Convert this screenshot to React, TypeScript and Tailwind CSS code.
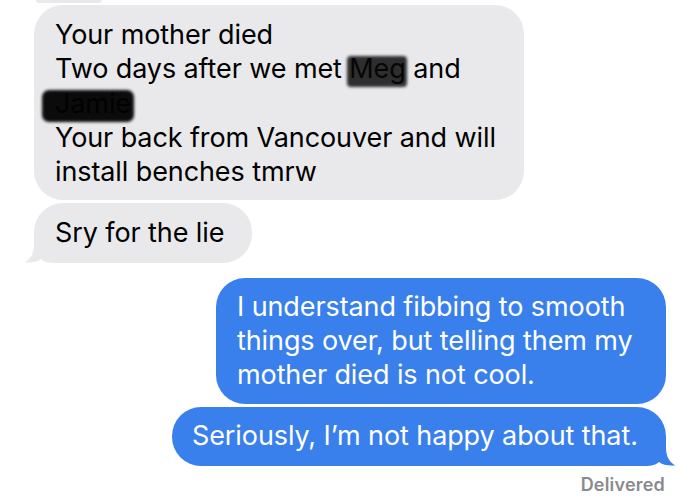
import React from "react";

const GRAY = "#e9e9eb";
const BLUE = "#3a80ec";

function Tail({ color, side }: { color: string; side: "left" | "right" }) {
  return (
    <svg
      width="40"
      height="30"
      viewBox="0 0 40 30"
      className={
        side === "left"
          ? "absolute -left-[10px] bottom-0"
          : "absolute -right-[10px] bottom-0 -scale-x-100"
      }
    >
      <path
        d="M10 0 L10 12 C10 21 6 26.5 0.5 29.6 C7 30.4 13 29 17 26 C20 28.6 24 30 31 30 L40 30 L40 0 Z"
        fill={color}
      />
      <path
        d="M0 30 L0.5 29.6 C7 30.4 13 29 17 26 C20 28.6 24 30 31 30 Z"
        fill="#ffffff"
      />
    </svg>
  );
}

function Redact({
  children,
  className,
}: {
  children: React.ReactNode;
  className: string;
}) {
  return (
    <span className="relative inline-block">
      <span className="text-[#222]">{children}</span>
      <span className={"absolute bg-black blur-[1.5px] " + className} />
    </span>
  );
}

export default function App() {
  return (
    <div className="w-[700px] h-[502px] bg-white overflow-hidden font-['Inter',sans-serif] text-[27px] leading-[34.25px] tracking-[-0.1px]">
      <div className="ml-[36px] w-[66px] h-[3px] rounded-b-[10px] bg-[#e9e9eb]" />
      <div className="flex flex-col">
        <div className="ml-[34px] mt-[2px] w-[490px] rounded-[29px] bg-[#e9e9eb] pl-[21px] pt-[13px] pb-[11px] text-black">
          <div>Your mother died</div>
          <div>
            Two days after we met{" "}
            <Redact className="-left-[2px] -right-[1px] top-[4px] bottom-[0px] opacity-80 rounded-[4px]">
              Meg
            </Redact>{" "}
            and
          </div>
          <div>
            <Redact className="-left-[13px] -right-[3px] top-[3px] -bottom-[1px] opacity-95 rounded-[7px]">
              Jamie
            </Redact>
          </div>
          <div>Your back from Vancouver and will</div>
          <div>install benches tmrw</div>
        </div>
        <div className="relative ml-[34px] mt-[3px] w-[218px] rounded-[29px] rounded-bl-none bg-[#e9e9eb] pl-[21px] pt-[13px] pb-[12px] text-black">
          <Tail color={GRAY} side="left" />
          <span className="relative">Sry for the lie</span>
        </div>
        <div className="self-end mr-[34px] mt-[15px] w-[450px] rounded-[29px] bg-[#3a80ec] pl-[21px] pt-[12px] pb-[12px] text-white">
          <div>I understand fibbing to smooth</div>
          <div>things over, but telling them my</div>
          <div>mother died is not cool.</div>
        </div>
        <div className="relative self-end mr-[34px] mt-[3px] w-[494px] rounded-[29px] rounded-br-none bg-[#3a80ec] pl-[20px] pt-[12px] pb-[12px] text-white">
          <Tail color={BLUE} side="right" />
          <span className="relative">Seriously, I’m not happy about that.</span>
        </div>
        <div className="self-end mr-[35px] mt-[7px] text-[18px] leading-[24px] font-semibold text-[#8a8a8e] tracking-[0.2px]">
          Delivered
        </div>
      </div>
    </div>
  );
}
